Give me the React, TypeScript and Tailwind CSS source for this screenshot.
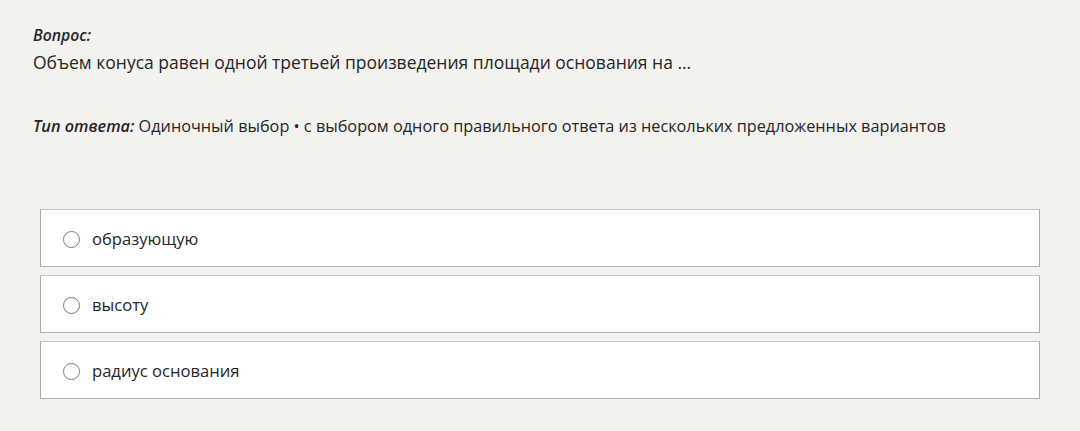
import React from "react";

const options = ["образующую", "высоту", "радиус основания"];

function Option({ label }: { label: string }) {
  return (
    <label className="flex h-[58px] items-center border border-[#a9a9a7] border-t-[#c4c4c2] border-b-[#b3b3b1] bg-white pl-[22px] pt-[3px]">
      <span className="h-[17px] w-[17px] rounded-full border border-[#7a7a7a] bg-white" />
      <span className="ml-[12px] text-[16.6px] text-[#262626]">{label}</span>
    </label>
  );
}

export default function App() {
  return (
    <div
      className="min-h-[431px] bg-[#f3f2ee] pl-[33px] pr-[40px] pt-[24px] text-[#262626]"
      style={{ fontFamily: '"Open Sans", "Noto Sans", sans-serif' }}
    >
      <div className="text-[15.8px] font-semibold italic leading-[22px]">Вопрос:</div>
      <div className="mt-[3px] text-[17.5px] leading-[26px]">
        Объем конуса равен одной третьей произведения площади основания на ...
      </div>
      <div className="mt-[39px] text-[16.25px] leading-[24px]">
        <span className="font-semibold italic">Тип ответа:</span> Одиночный выбор • с выбором одного правильного ответа из нескольких предложенных вариантов
      </div>
      <div className="mt-[71px] ml-[7px] flex flex-col gap-[8px]">
        {options.map((o) => (
          <Option key={o} label={o} />
        ))}
      </div>
    </div>
  );
}
